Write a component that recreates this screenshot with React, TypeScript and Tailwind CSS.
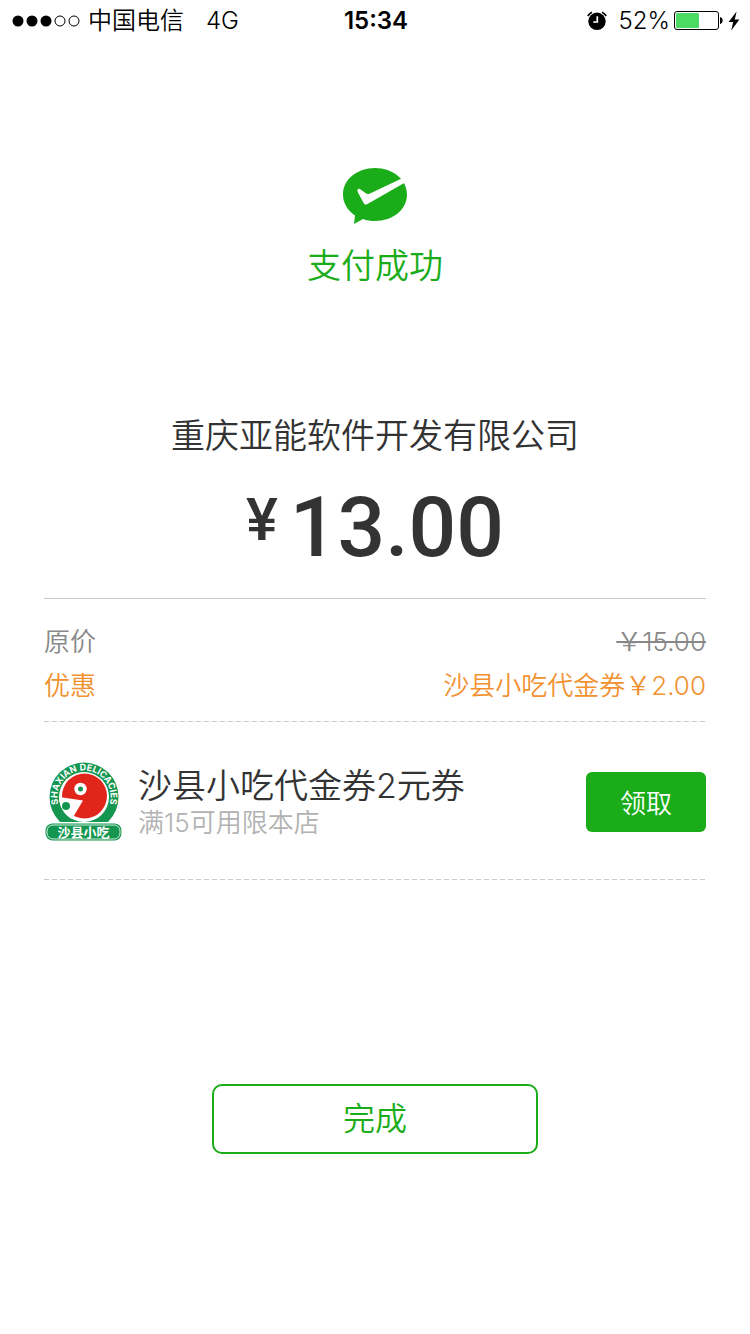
import type { ReactNode } from 'react'

const SignalDots = () => {
  return (
    <svg className="h-3 w-[68px]" viewBox="0 0 68 12">
      <circle cx="6" cy="6" r="5.5" />
      <circle cx="20" cy="6" r="5.5" />
      <circle cx="34" cy="6" r="5.5" />
      <circle cx="48" cy="6" r="5" fill="none" stroke="#000" />
      <circle cx="62" cy="6" r="5" fill="none" stroke="#000" />
    </svg>
  )
}

const AlarmIcon = () => {
  return (
    <svg className="h-5 w-5" viewBox="0 0 20 20">
      <circle cx="10" cy="10.3" r="8.7" />
      <path
        d="M0.8 5 A9.5 9.5 0 0 1 5 1.2 M15 1.2 A9.5 9.5 0 0 1 19.2 5"
        fill="none"
        stroke="#000"
        strokeWidth="1.6"
      />
      <path
        d="M10.3 5.2 V11 H6.2"
        fill="none"
        stroke="#fff"
        strokeWidth="1.7"
      />
    </svg>
  )
}

const BatteryIcon = () => {
  return (
    <svg className="h-5 w-[49px]" viewBox="0 0 49 20">
      <rect
        x="0.5"
        y="0.5"
        width="44"
        height="18"
        rx="2.5"
        fill="none"
        stroke="#000"
      />
      <rect x="2" y="2" width="23" height="15" rx="1" fill="#4cd964" />
      <path d="M46 6 C49.5 6.7 49.5 12.3 46 13 Z" />
    </svg>
  )
}

const BoltIcon = () => {
  return (
    <svg className="h-5 w-3" viewBox="0 0 12 20">
      <path d="M8.6 0.5 L0.6 11 H5.2 L3.2 19.5 L11.4 8.4 H6.8 Z" />
    </svg>
  )
}

const StatusBar = () => {
  return (
    <header className="grid h-[42px] grid-cols-3 items-center pr-[10px] pl-3 text-2xl text-black">
      <div className="flex items-center gap-2">
        <SignalDots />
        <span>中国电信</span>
        <span className="pl-[14px]">4G</span>
      </div>
      <span className="text-center font-semibold">15:34</span>
      <div className="flex items-center justify-end">
        <AlarmIcon />
        <span className="pr-1 pl-3">52%</span>
        <BatteryIcon />
        <span className="pl-[5px]">
          <BoltIcon />
        </span>
      </div>
    </header>
  )
}

const PayLogo = () => {
  return (
    <svg className="h-14 w-16" viewBox="0 0 64 56">
      <path
        d="M32 0 C50 0 64 11.5 64 26.5 C64 41.5 50 53 32 53 C27.5 53 23.5 52.4 20 51 L11 56 L12 47.5 C4.5 42.5 0 35 0 26.5 C0 11.5 14 0 32 0 Z"
        fill="#1aad19"
      />
      <path
        d="M14.5 22 C14.8 20.6 16 20.3 17.2 21.2 L22.8 25.3 C24 26.2 25.3 26.3 27 25.5 L57 11.3 L60 10 L62.5 14.3 L24.5 36 C22.8 37 21.3 36.6 20.5 34.8 L15 24.5 C14.5 23.5 14.3 22.8 14.5 22 Z"
        fill="#fff"
      />
    </svg>
  )
}

const ShopLogo = () => {
  return (
    <svg className="h-20 w-20 shrink-0" viewBox="0 0 80 80">
      <circle cx="40" cy="35" r="34.5" fill="#149650" />
      <circle cx="40" cy="35" r="25" fill="#fff" />
      <circle cx="40.5" cy="34" r="22.5" fill="#e1251b" />
      <path d="M39 38.5 L15.2 35 A25 25 0 0 0 28 57 Z" fill="#fff" />
      <circle cx="36.5" cy="27" r="6.2" fill="#fff" />
      <circle cx="36.5" cy="27" r="2.5" fill="#149650" />
      <circle cx="22" cy="44" r="4" fill="#149650" />
      <path id="ring" d="M18 50 A26.6 26.6 0 1 1 62 50" fill="none" />
      <text className="text-[9px] font-bold" fill="#fff" textAnchor="middle">
        <textPath href="#ring" startOffset="50%">
          SHAXIAN DELICACIES
        </textPath>
      </text>
      <rect x="0" y="60" width="80" height="20" rx="9" fill="#fff" />
      <rect x="1.5" y="61.5" width="76" height="17" rx="7" fill="#149650" />
      <rect
        x="3"
        y="63"
        width="73"
        height="14"
        rx="6"
        fill="none"
        stroke="#fff"
        strokeWidth="0.8"
      />
      <text
        className="text-[13px] font-bold"
        x="39.5"
        y="74.5"
        fill="#fff"
        textAnchor="middle"
      >
        沙县小吃
      </text>
    </svg>
  )
}

const PriceRow = (props: {
  label: string
  className: string
  children: ReactNode
}) => {
  return (
    <div className={'flex justify-between ' + props.className}>
      <dt>{props.label}</dt>
      <dd>{props.children}</dd>
    </div>
  )
}

const DashedLine = () => {
  return (
    <div className="h-px bg-[repeating-linear-gradient(90deg,#c8c8c8_0_5px,transparent_5px_8px)]" />
  )
}

const Coupon = () => {
  return (
    <section className="flex items-center pt-10 pb-[37px]">
      <ShopLogo />
      <div className="flex flex-1 flex-col pl-[14px]">
        <span className="text-[34px] leading-[42px] text-[#333]">
          沙县小吃代金券2元券
        </span>
        <span className="text-[26px] leading-8 text-[#b2b2b2]">
          满15可用限本店
        </span>
      </div>
      <button className="h-[60px] w-[120px] rounded-md bg-[#1aad19] pt-0.5 text-[26px] text-white">
        领取
      </button>
    </section>
  )
}

export default function App() {
  return (
    <div className="min-h-screen w-full bg-white font-['Inter','Noto_Sans_CJK_SC',sans-serif] font-[350]">
      <StatusBar />
      <main className="flex flex-col px-11">
        <div className="flex flex-col items-center pt-[126px]">
          <PayLogo />
          <h1 className="pt-4 text-[34px] leading-[52px] font-[350] text-[#1aad19]">
            支付成功
          </h1>
        </div>

        <div className="flex flex-col items-center pt-[119px] text-[#333]">
          <h2 className="text-[34px] leading-[50px] font-[350]">
            重庆亚能软件开发有限公司
          </h2>
          <p className="flex items-start gap-3 pt-4 pb-[19px] font-[Roboto] font-medium">
            <span className="text-[60px] leading-[86px]">¥</span>
            <span className="text-[84px] leading-[102px]">13.00</span>
          </p>
        </div>

        <dl className="border-t border-[#c8c8c8] pt-[21px] pb-[13px] text-[26px] leading-[44px]">
          <PriceRow label="原价" className="text-[#888]">
            <del>￥15.00</del>
          </PriceRow>
          <PriceRow label="优惠" className="text-[#f19130]">
            沙县小吃代金券￥2.00
          </PriceRow>
        </dl>
        <DashedLine />
        <Coupon />
        <DashedLine />

        <button className="mt-[204px] h-[70px] w-[326px] self-center rounded-[10px] border-2 border-[#1aad19] text-[32px] text-[#1aad19]">
          完成
        </button>
      </main>
    </div>
  )
}
